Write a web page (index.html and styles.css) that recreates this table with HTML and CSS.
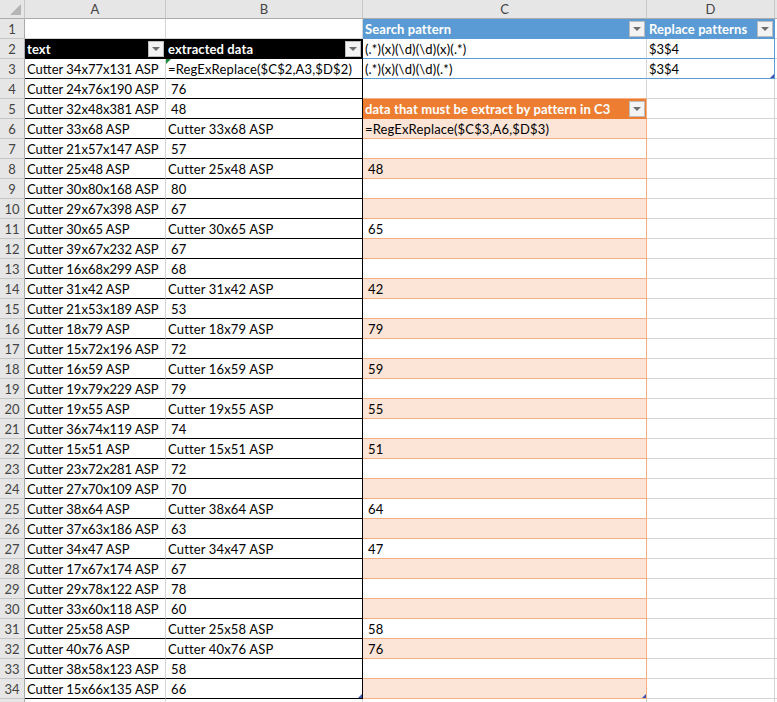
FILE: index.html
```html
<!DOCTYPE html>
<html>
<head>
<meta charset="utf-8">
<link rel="stylesheet" href="styles.css">
</head>
<body>
<div class="sheet">
<div class="corner"><span class="corner-tri"></span></div><div class="ch">A</div><div class="ch">B</div><div class="ch">C</div><div class="ch">D</div><div class="ch e-h"></div>

<div class="rh">1</div><div class="c"></div><div class="c"></div><div class="c hb"><span class="ht">Search pattern</span><span class="dd"></span></div><div class="c hb"><span class="ht">Replace patterns</span><span class="dd"></span></div><div class="c e"></div>
<div class="rh">2</div><div class="c hk"><span class="ht">text</span><span class="dd"></span></div><div class="c hk"><span class="ht">extracted data</span><span class="dd"></span></div><div class="c bl">(.*)(x)(\d)(\d)(x)(.*)</div><div class="c bld">$3$4</div><div class="c e"></div>
<div class="rh">3</div><div class="c ak">Cutter 34x77x131 ASP</div><div class="c bk">=RegExReplace($C$2,A3,$D$2)<span class="err"></span></div><div class="c bl">(.*)(x)(\d)(\d)(.*)</div><div class="c bld">$3$4<span class="handle"></span></div><div class="c e"></div>
<div class="rh">4</div><div class="c ak">Cutter 24x76x190 ASP</div><div class="c bk n">76</div><div class="c c4"></div><div class="c"></div><div class="c e"></div>
<div class="rh">5</div><div class="c ak">Cutter 32x48x381 ASP</div><div class="c bk n">48</div><div class="c ho"><span class="ht">data that must be extract by pattern in C3</span><span class="dd"></span></div><div class="c"></div><div class="c e"></div>
<div class="rh">6</div><div class="c ak">Cutter 33x68 ASP</div><div class="c bk">Cutter 33x68 ASP</div><div class="c co pe">=RegExReplace($C$3,A6,$D$3)</div><div class="c"></div><div class="c e"></div>
<div class="rh">7</div><div class="c ak">Cutter 21x57x147 ASP</div><div class="c bk n">57</div><div class="c co"></div><div class="c"></div><div class="c e"></div>
<div class="rh">8</div><div class="c ak">Cutter 25x48 ASP</div><div class="c bk">Cutter 25x48 ASP</div><div class="c co pe n">48</div><div class="c"></div><div class="c e"></div>
<div class="rh">9</div><div class="c ak">Cutter 30x80x168 ASP</div><div class="c bk n">80</div><div class="c co"></div><div class="c"></div><div class="c e"></div>
<div class="rh">10</div><div class="c ak">Cutter 29x67x398 ASP</div><div class="c bk n">67</div><div class="c co pe"></div><div class="c"></div><div class="c e"></div>
<div class="rh">11</div><div class="c ak">Cutter 30x65 ASP</div><div class="c bk">Cutter 30x65 ASP</div><div class="c co n">65</div><div class="c"></div><div class="c e"></div>
<div class="rh">12</div><div class="c ak">Cutter 39x67x232 ASP</div><div class="c bk n">67</div><div class="c co pe"></div><div class="c"></div><div class="c e"></div>
<div class="rh">13</div><div class="c ak">Cutter 16x68x299 ASP</div><div class="c bk n">68</div><div class="c co"></div><div class="c"></div><div class="c e"></div>
<div class="rh">14</div><div class="c ak">Cutter 31x42 ASP</div><div class="c bk">Cutter 31x42 ASP</div><div class="c co pe n">42</div><div class="c"></div><div class="c e"></div>
<div class="rh">15</div><div class="c ak">Cutter 21x53x189 ASP</div><div class="c bk n">53</div><div class="c co"></div><div class="c"></div><div class="c e"></div>
<div class="rh">16</div><div class="c ak">Cutter 18x79 ASP</div><div class="c bk">Cutter 18x79 ASP</div><div class="c co pe n">79</div><div class="c"></div><div class="c e"></div>
<div class="rh">17</div><div class="c ak">Cutter 15x72x196 ASP</div><div class="c bk n">72</div><div class="c co"></div><div class="c"></div><div class="c e"></div>
<div class="rh">18</div><div class="c ak">Cutter 16x59 ASP</div><div class="c bk">Cutter 16x59 ASP</div><div class="c co pe n">59</div><div class="c"></div><div class="c e"></div>
<div class="rh">19</div><div class="c ak">Cutter 19x79x229 ASP</div><div class="c bk n">79</div><div class="c co"></div><div class="c"></div><div class="c e"></div>
<div class="rh">20</div><div class="c ak">Cutter 19x55 ASP</div><div class="c bk">Cutter 19x55 ASP</div><div class="c co pe n">55</div><div class="c"></div><div class="c e"></div>
<div class="rh">21</div><div class="c ak">Cutter 36x74x119 ASP</div><div class="c bk n">74</div><div class="c co"></div><div class="c"></div><div class="c e"></div>
<div class="rh">22</div><div class="c ak">Cutter 15x51 ASP</div><div class="c bk">Cutter 15x51 ASP</div><div class="c co pe n">51</div><div class="c"></div><div class="c e"></div>
<div class="rh">23</div><div class="c ak">Cutter 23x72x281 ASP</div><div class="c bk n">72</div><div class="c co"></div><div class="c"></div><div class="c e"></div>
<div class="rh">24</div><div class="c ak">Cutter 27x70x109 ASP</div><div class="c bk n">70</div><div class="c co pe"></div><div class="c"></div><div class="c e"></div>
<div class="rh">25</div><div class="c ak">Cutter 38x64 ASP</div><div class="c bk">Cutter 38x64 ASP</div><div class="c co n">64</div><div class="c"></div><div class="c e"></div>
<div class="rh">26</div><div class="c ak">Cutter 37x63x186 ASP</div><div class="c bk n">63</div><div class="c co pe"></div><div class="c"></div><div class="c e"></div>
<div class="rh">27</div><div class="c ak">Cutter 34x47 ASP</div><div class="c bk">Cutter 34x47 ASP</div><div class="c co n">47</div><div class="c"></div><div class="c e"></div>
<div class="rh">28</div><div class="c ak">Cutter 17x67x174 ASP</div><div class="c bk n">67</div><div class="c co pe"></div><div class="c"></div><div class="c e"></div>
<div class="rh">29</div><div class="c ak">Cutter 29x78x122 ASP</div><div class="c bk n">78</div><div class="c co"></div><div class="c"></div><div class="c e"></div>
<div class="rh">30</div><div class="c ak">Cutter 33x60x118 ASP</div><div class="c bk n">60</div><div class="c co pe"></div><div class="c"></div><div class="c e"></div>
<div class="rh">31</div><div class="c ak">Cutter 25x58 ASP</div><div class="c bk">Cutter 25x58 ASP</div><div class="c co n">58</div><div class="c"></div><div class="c e"></div>
<div class="rh">32</div><div class="c ak">Cutter 40x76 ASP</div><div class="c bk">Cutter 40x76 ASP</div><div class="c co pe n">76</div><div class="c"></div><div class="c e"></div>
<div class="rh">33</div><div class="c ak">Cutter 38x58x123 ASP</div><div class="c bk n">58</div><div class="c co"></div><div class="c"></div><div class="c e"></div>
<div class="rh">34</div><div class="c ak">Cutter 15x66x135 ASP</div><div class="c bk n">66<span class="handle"></span></div><div class="c co pe"><span class="handle"></span></div><div class="c"></div><div class="c e"></div>
<div class="rh"></div><div class="c"></div><div class="c"></div><div class="c"></div><div class="c"></div><div class="c e"></div>
</div>
</body>
</html>
```

FILE: styles.css
```css
html, body {
  margin: 0;
  padding: 0;
  overflow: hidden;
  background: #fff;
}

body {
  font-family: "Lato", "Liberation Sans", sans-serif;
  font-size: 13px;
  color: #000;
}

.sheet {
  display: grid;
  grid-template-columns: 25px 141px 197px 284px 128px 1fr;
  grid-template-rows: 19px repeat(35, 20px);
}

.corner,
.ch {
  box-sizing: border-box;
  background: #e6e6e6;
  border-right: 1px solid #c6c6c6;
  border-bottom: 1px solid #ababab;
  display: flex;
  align-items: center;
  justify-content: center;
  color: #444;
  position: relative;
}

.e-h {
  border-right: none;
}

.corner-tri {
  position: absolute;
  right: 3px;
  bottom: 3px;
  width: 11px;
  height: 11px;
  background: #b5b5b5;
  clip-path: polygon(100% 0, 100% 100%, 0 100%);
}

.rh {
  box-sizing: border-box;
  background: #e6e6e6;
  border-right: 1px solid #ababab;
  border-bottom: 1px solid #c6c6c6;
  display: flex;
  align-items: center;
  justify-content: center;
  color: #444;
  padding-top: 1px;
}

.c {
  box-sizing: border-box;
  border-right: 1px solid #d4d4d4;
  border-bottom: 1px solid #d4d4d4;
  padding: 1px 2px 0 2px;
  display: flex;
  align-items: center;
  white-space: nowrap;
  overflow: hidden;
  position: relative;
}

.c.e {
  border-right: none;
}

.n {
  padding-left: 5px;
}

.bl,
.co,
.bk {
  letter-spacing: 0.15px;
}

.ak {
  letter-spacing: 0;
}

/* header cells with filter buttons */
.ht {
  flex: 1;
  font-weight: bold;
  color: #fff;
  overflow: hidden;
  letter-spacing: 0.1px;
}

.dd {
  box-sizing: border-box;
  width: 16px;
  height: 16px;
  background: #f3f3f3;
  border: 1px solid #bcbcbc;
  display: flex;
  align-items: center;
  justify-content: center;
  flex: none;
}

.dd::after {
  content: "";
  width: 0;
  height: 0;
  border-left: 4px solid transparent;
  border-right: 4px solid transparent;
  border-top: 4px solid #6d6d6d;
}

/* black table */
.hk {
  background: #000;
  border-right-color: #000;
  border-bottom-color: #000;
  padding-right: 1px;
}

.ak {
  border-bottom-color: #000;
}

.bk {
  border-bottom-color: #000;
  border-right-color: #000;
}

/* blue table */
.hb {
  background: #5b9bd5;
  border-right-color: #5b9bd5;
  border-bottom-color: #5b9bd5;
  padding-right: 1px;
}

.bl {
  border-bottom-color: #5b9bd5;
}

.bld {
  border-bottom-color: #5b9bd5;
  border-right-color: #5b9bd5;
}

/* orange table */
.c4 {
  border-bottom-color: #f4b084;
}

.ho {
  background: #ed7d31;
  border-right-color: #f4b084;
  border-bottom-color: #ed7d31;
  padding-right: 1px;
}

.co {
  border-bottom-color: #f4b084;
  border-right-color: #f4b084;
}

.pe {
  background: #fce4d6;
}

/* overlays */
.err {
  position: absolute;
  left: 0;
  top: 0;
  width: 0;
  height: 0;
  border-top: 5px solid #1f8a3a;
  border-right: 5px solid transparent;
}

.handle {
  position: absolute;
  right: 0;
  bottom: 0;
  width: 4px;
  height: 4px;
  background: #3d55b0;
  clip-path: polygon(100% 0, 100% 100%, 0 100%);
}
```
